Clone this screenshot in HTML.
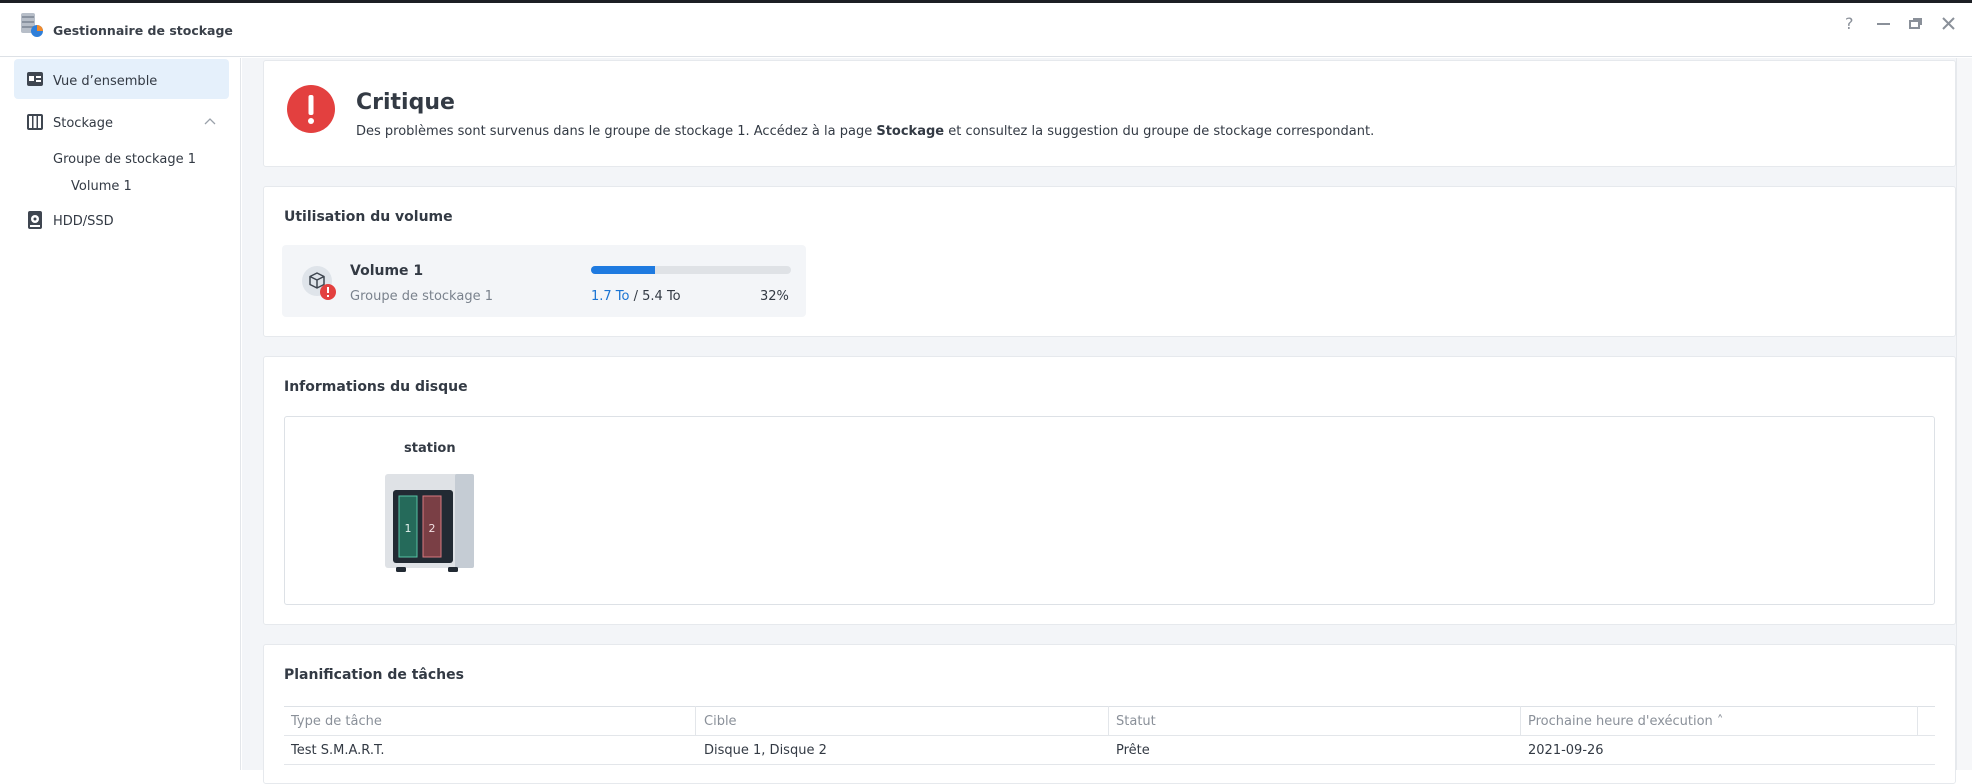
<!DOCTYPE html>
<html><head><meta charset="utf-8"><style>
*{box-sizing:border-box;margin:0;padding:0}
body{width:1972px;height:770px;overflow:hidden;background:#fff;font-family:"DejaVu Sans","Liberation Sans",sans-serif;color:#333a44;position:relative}
.abs{position:absolute}
.card{position:absolute;left:263px;width:1693px;background:#fff;border:1px solid #e6e9ed;border-radius:3px}
.h{font-weight:bold;font-size:14px;color:#333a44}
.t13{font-size:13px}
.s{font-size:13px}
</style></head><body>
<div class="abs" style="left:0;top:0;width:1972px;height:3px;background:#1c1f24"></div>
<div class="abs" style="left:0;top:3px;width:1972px;height:54px;background:#fff;border-bottom:1px solid #dde1e6"></div>
<svg class="abs" style="left:19px;top:12px" width="26" height="26" viewBox="0 0 26 26">
<rect x="2" y="1" width="14" height="20" rx="2" fill="#b7bec8"/><rect x="3" y="4" width="12" height="2" fill="#8a93a0"/><rect x="3" y="9" width="12" height="2" fill="#8a93a0"/><rect x="3" y="14" width="12" height="2" fill="#8a93a0"/>
<circle cx="18" cy="19" r="6" fill="#2f7fd9"/><path d="M18 19 L18 13 A6 6 0 0 1 24 19Z" fill="#f08a2c"/></svg>
<div class="abs" style="left:53px;top:23px;font-size:12.5px;font-weight:bold;color:#3a4049">Gestionnaire de stockage</div>
<div class="abs" style="left:1845px;top:14px;font-size:16px;color:#8a9099">?</div>
<div class="abs" style="left:1877px;top:23px;width:13px;height:2px;background:#8a9099"></div>
<svg class="abs" style="left:1909px;top:17px" width="14" height="12"><rect x="1" y="4" width="9" height="7" fill="none" stroke="#8a9099" stroke-width="2"/><path d="M4 2H12V8" fill="none" stroke="#8a9099" stroke-width="2"/></svg>
<svg class="abs" style="left:1942px;top:17px" width="13" height="13"><path d="M1 1L12 12M12 1L1 12" stroke="#8a9099" stroke-width="2"/></svg>
<div class="abs" style="left:0;top:58px;width:241px;height:712px;background:#fff;border-right:1px solid #e3e6ea"></div>
<div class="abs" style="left:14px;top:59px;width:215px;height:40px;background:#e5f0fb;border-radius:4px"></div>
<svg class="abs" style="left:26px;top:71px" width="18" height="16"><rect x="1" y="1" width="16" height="14" rx="2" fill="#3f4650"/><rect x="3" y="5" width="5" height="5" fill="#fff"/><rect x="10" y="5" width="5" height="2" fill="#fff"/><rect x="10" y="9" width="5" height="2" fill="#fff"/></svg>
<div class="abs s" style="left:53px;top:74px">Vue d’ensemble</div>
<svg class="abs" style="left:26px;top:113px" width="18" height="18"><rect x="1" y="1" width="16" height="16" rx="2" fill="#3f4650"/><rect x="3" y="3" width="3" height="12" fill="#fff"/><rect x="7.5" y="3" width="3" height="12" fill="#fff"/><rect x="12" y="3" width="3" height="12" fill="#fff"/></svg>
<div class="abs s" style="left:53px;top:116px">Stockage</div>
<svg class="abs" style="left:204px;top:117px" width="12" height="8"><path d="M1 7L6 2L11 7" fill="none" stroke="#9aa1aa" stroke-width="1.3"/></svg>
<div class="abs s" style="left:53px;top:152px">Groupe de stockage 1</div>
<div class="abs s" style="left:71px;top:179px">Volume 1</div>
<svg class="abs" style="left:27px;top:210px" width="16" height="20"><rect x="1" y="1" width="14" height="18" rx="2" fill="#3f4650"/><circle cx="8" cy="9" r="4" fill="#fff"/><circle cx="8" cy="9" r="1.5" fill="#3f4650"/><rect x="3" y="15" width="10" height="2" fill="#fff"/></svg>
<div class="abs s" style="left:53px;top:214px">HDD/SSD</div>
<div class="abs" style="left:242px;top:58px;width:1730px;height:712px;background:#f3f5f8"></div>
<div class="abs" style="left:1956px;top:58px;width:16px;height:712px;background:#f6f7f9;border-left:1px solid #e6e9ed"></div>
<div class="card" style="top:60px;height:107px"></div>
<svg class="abs" style="left:286px;top:84px" width="50" height="50"><circle cx="25" cy="25" r="24" fill="#e3403f"/><rect x="22.5" y="11" width="5" height="20" rx="2" fill="#fff"/><circle cx="25" cy="37" r="3" fill="#fff"/></svg>
<div class="abs" style="left:356px;top:90px;font-size:22px;font-weight:bold;color:#333a44">Critique</div>
<div class="abs t13" style="left:356px;top:124px">Des problèmes sont survenus dans le groupe de stockage 1. Accédez à la page <b>Stockage</b> et consultez la suggestion du groupe de stockage correspondant.</div>
<div class="card" style="top:186px;height:151px"></div>
<div class="abs h" style="left:284px;top:209px">Utilisation du volume</div>
<div class="abs" style="left:282px;top:245px;width:524px;height:72px;background:#f3f5f8;border-radius:4px"></div>
<div class="abs" style="left:302px;top:266px;width:30px;height:30px;border-radius:50%;background:#dfe4ea"></div>
<svg class="abs" style="left:309px;top:272px" width="16" height="17"><path d="M8 1L15 4.5V12.5L8 16L1 12.5V4.5Z M1 4.5L8 8L15 4.5 M8 8V16" fill="none" stroke="#3f4650" stroke-width="1.5" stroke-linejoin="round"/></svg>
<svg class="abs" style="left:319px;top:283px" width="18" height="18"><circle cx="9" cy="9" r="8" fill="#e3403f"/><rect x="8" y="4" width="2" height="6" fill="#fff"/><rect x="8" y="12" width="2" height="2" fill="#fff"/></svg>
<div class="abs" style="left:350px;top:263px;font-size:14px;font-weight:bold">Volume 1</div>
<div class="abs t13" style="left:350px;top:289px;color:#7a828d">Groupe de stockage 1</div>
<div class="abs" style="left:591px;top:266px;width:200px;height:8px;border-radius:4px;background:#dfe2e6"></div>
<div class="abs" style="left:591px;top:266px;width:64px;height:8px;border-radius:4px 0 0 4px;background:#1e7ae0"></div>
<div class="abs t13" style="left:591px;top:289px"><span style="color:#1a74d3">1.7 To</span> / 5.4 To</div>
<div class="abs t13" style="left:760px;top:289px">32%</div>
<div class="card" style="top:356px;height:269px"></div>
<div class="abs h" style="left:284px;top:379px">Informations du disque</div>
<div class="abs" style="left:284px;top:416px;width:1651px;height:189px;border:1px solid #dde1e6;border-radius:3px;background:#fff"></div>
<div class="abs" style="left:404px;top:441px;font-size:13px;font-weight:bold">station</div>
<svg class="abs" style="left:384px;top:473px" width="91" height="100">
<rect x="1" y="1" width="89" height="94" rx="3" fill="#dfe2e6"/><rect x="71" y="1" width="19" height="94" rx="2" fill="#c5ccd4"/>
<rect x="9" y="17" width="60" height="73" rx="3" fill="#222a33"/>
<rect x="15" y="23" width="18" height="61" fill="#256a5a" stroke="#56c3a4" stroke-width="1"/>
<rect x="39" y="23" width="18" height="61" fill="#7a3f45" stroke="#d87a80" stroke-width="1"/>
<text x="24" y="59" font-family="DejaVu Sans" font-size="11" fill="#e6f2ee" text-anchor="middle">1</text>
<text x="48" y="59" font-family="DejaVu Sans" font-size="11" fill="#f2e0e2" text-anchor="middle">2</text>
<rect x="12" y="94" width="10" height="5" rx="1.5" fill="#222a33"/><rect x="64" y="94" width="10" height="5" rx="1.5" fill="#222a33"/></svg>
<div class="card" style="top:644px;height:140px"></div>
<div class="abs h" style="left:284px;top:667px">Planification de tâches</div>
<div class="abs" style="left:284px;top:706px;width:1651px;height:1px;background:#dde1e6"></div>
<div class="abs" style="left:284px;top:735px;width:1651px;height:1px;background:#e3e6ea"></div>
<div class="abs" style="left:284px;top:764px;width:1651px;height:1px;background:#e3e6ea"></div>
<div class="abs" style="left:695px;top:706px;width:1px;height:29px;background:#e3e6ea"></div>
<div class="abs" style="left:1108px;top:706px;width:1px;height:29px;background:#e3e6ea"></div>
<div class="abs" style="left:1520px;top:706px;width:1px;height:29px;background:#e3e6ea"></div>
<div class="abs" style="left:1917px;top:706px;width:1px;height:29px;background:#e3e6ea"></div>
<div class="abs t13" style="left:291px;top:714px;color:#8a9099">Type de tâche</div>
<div class="abs t13" style="left:704px;top:714px;color:#8a9099">Cible</div>
<div class="abs t13" style="left:1116px;top:714px;color:#8a9099">Statut</div>
<div class="abs t13" style="left:1528px;top:714px;color:#8a9099">Prochaine heure d'exécution ˄</div>
<div class="abs t13" style="left:291px;top:743px">Test S.M.A.R.T.</div>
<div class="abs t13" style="left:704px;top:743px">Disque 1, Disque 2</div>
<div class="abs t13" style="left:1116px;top:743px">Prête</div>
<div class="abs t13" style="left:1528px;top:743px">2021-09-26</div>
</body></html>
